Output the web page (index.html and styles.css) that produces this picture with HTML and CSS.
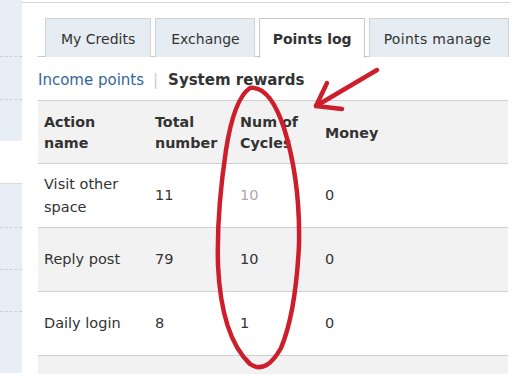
FILE: index.html
```html
<!DOCTYPE html>
<html>
<head>
<meta charset="utf-8">
<link rel="stylesheet" href="styles.css">
</head>
<body>
<div class="page">
  <aside class="sidebar">
    <div class="side-block side-top">
      <div class="side-item"></div>
      <div class="side-item"></div>
      <div class="side-item"></div>
    </div>
    <div class="side-block side-bottom">
      <div class="side-item"></div>
      <div class="side-item"></div>
      <div class="side-item"></div>
      <div class="side-item"></div>
    </div>
  </aside>
  <main class="main">
    <ul class="tabs">
      <li class="tab">My Credits</li>
      <li class="tab narrow">Exchange</li>
      <li class="tab active">Points log</li>
      <li class="tab wide">Points manage</li>
    </ul>
    <div class="subnav">
      <a class="sublink">Income points</a>
      <span class="sep">|</span>
      <span class="subcur">System rewards</span>
    </div>
    <div class="table">
      <div class="row head">
        <div class="cell c1">Action<br>name</div>
        <div class="cell c2">Total<br>number</div>
        <div class="cell c3">Num of<br>Cycles</div>
        <div class="cell c4">Money</div>
      </div>
      <div class="row">
        <div class="cell c1">Visit other<br>space</div>
        <div class="cell c2">11</div>
        <div class="cell c3 faded">10</div>
        <div class="cell c4">0</div>
      </div>
      <div class="row alt">
        <div class="cell c1">Reply post</div>
        <div class="cell c2">79</div>
        <div class="cell c3">10</div>
        <div class="cell c4">0</div>
      </div>
      <div class="row">
        <div class="cell c1">Daily login</div>
        <div class="cell c2">8</div>
        <div class="cell c3">1</div>
        <div class="cell c4">0</div>
      </div>
      <div class="row alt partial"></div>
    </div>
  </main>
  <svg class="marks" width="518" height="389" viewBox="0 0 518 389">
    <path d="M250 88 C238 96 231 118 226 150 C220 190 217 230 218 265 C220 310 230 345 250 364 C262 372 272 364 281 348 C292 322 297 285 299 245 C300 200 294 160 284 128 C276 104 265 86 250 88 Z" fill="none" stroke="#cc1f2b" stroke-width="4.5" stroke-linecap="round"/>
    <path d="M377 70 L316 106" fill="none" stroke="#cc1f2b" stroke-width="4.5" stroke-linecap="round"/>
    <path d="M327 83 L316 106 L342 109" fill="none" stroke="#cc1f2b" stroke-width="4.5" stroke-linecap="round" stroke-linejoin="round"/>
  </svg>
</div>
</body>
</html>
```
FILE: styles.css
```css
* { box-sizing: border-box; }
html, body { margin: 0; padding: 0; background: #fff; }
body {
  font-family: "DejaVu Sans", Verdana, sans-serif;
  font-size: 14px;
  color: #333;
}
.page {
  position: relative;
  display: flex;
  width: 518px;
  height: 389px;
  overflow: hidden;
}
.sidebar {
  width: 22px;
  flex: none;
  display: flex;
  flex-direction: column;
}
.side-block {
  background: #e8eef5;
  display: flex;
  flex-direction: column;
}
.side-top { height: 141px; padding-top: 14px; }
.side-bottom {
  margin-top: 42px;
  height: 190px;
  border-top: 1px solid #d8dde3;
  padding-top: 2px;
}
.side-item {
  height: 43px;
  border-bottom: 1px dashed #c9d0d8;
  flex: none;
}
.side-top .side-item:last-child { border-bottom: none; }
.side-bottom .side-item { height: 42px; }
.side-bottom .side-item:last-child { border-bottom: none; }

.main {
  width: 488px;
  flex: none;
  margin-top: 2px;
  border-top: 1px solid #d6d6d6;
  padding-left: 16px;
  padding-top: 15px;
}
.tabs {
  list-style: none;
  margin: 0;
  padding: 0 0 0 7px;
  display: flex;
  gap: 4px;
  border-bottom: 1px solid #c8c8c8;
  height: 39px;
  width: 470px;
}
.tab {
  height: 39px;
  padding: 0 15px;
  background: #e5ecf2;
  border: 1px solid #cdd3d8;
  border-bottom: none;
  font-size: 14px;
  line-height: 40px;
  color: #333;
  white-space: nowrap;
}
.tab.narrow { padding: 0 14px 0 15px; }
.tab.wide { padding: 0 17px 0 14px; letter-spacing: 0.3px; }
.tab.active {
  background: #fff;
  font-weight: bold;
  height: 40px;
  margin-bottom: -1px;
  border-color: #c8c8c8;
  padding: 0 12px 0 13px;
}
.subnav {
  height: 43px;
  display: flex;
  align-items: center;
  font-size: 15px;
  padding-top: 2px;
}
.sublink { color: #336699; }
.sep { color: #ccc; margin: 0 10px 0 9px; }
.subcur { font-weight: bold; color: #333; }

.table {
  width: 470px;
  border-top: 1px solid #cfcfcf;
}
.row {
  display: flex;
  align-items: center;
  height: 64px;
  border-bottom: 1px solid #cfcfcf;
  line-height: 23px;
  font-size: 14.5px;
}
.row.head, .row.alt { background: #f2f2f2; }
.row.head {
  font-weight: bold;
  height: 63px;
  font-size: 14.3px;
  line-height: 21px;
  padding-top: 2px;
}
.row.partial { height: 18px; border-bottom: none; }
.cell { padding-left: 6px; }
.c1 { width: 111px; }
.c2 { width: 85px; }
.c3 { width: 85px; }
.c4 { flex: 1; }
.faded { color: #aaa; }

.marks {
  position: absolute;
  left: 0;
  top: 0;
  pointer-events: none;
}
```
